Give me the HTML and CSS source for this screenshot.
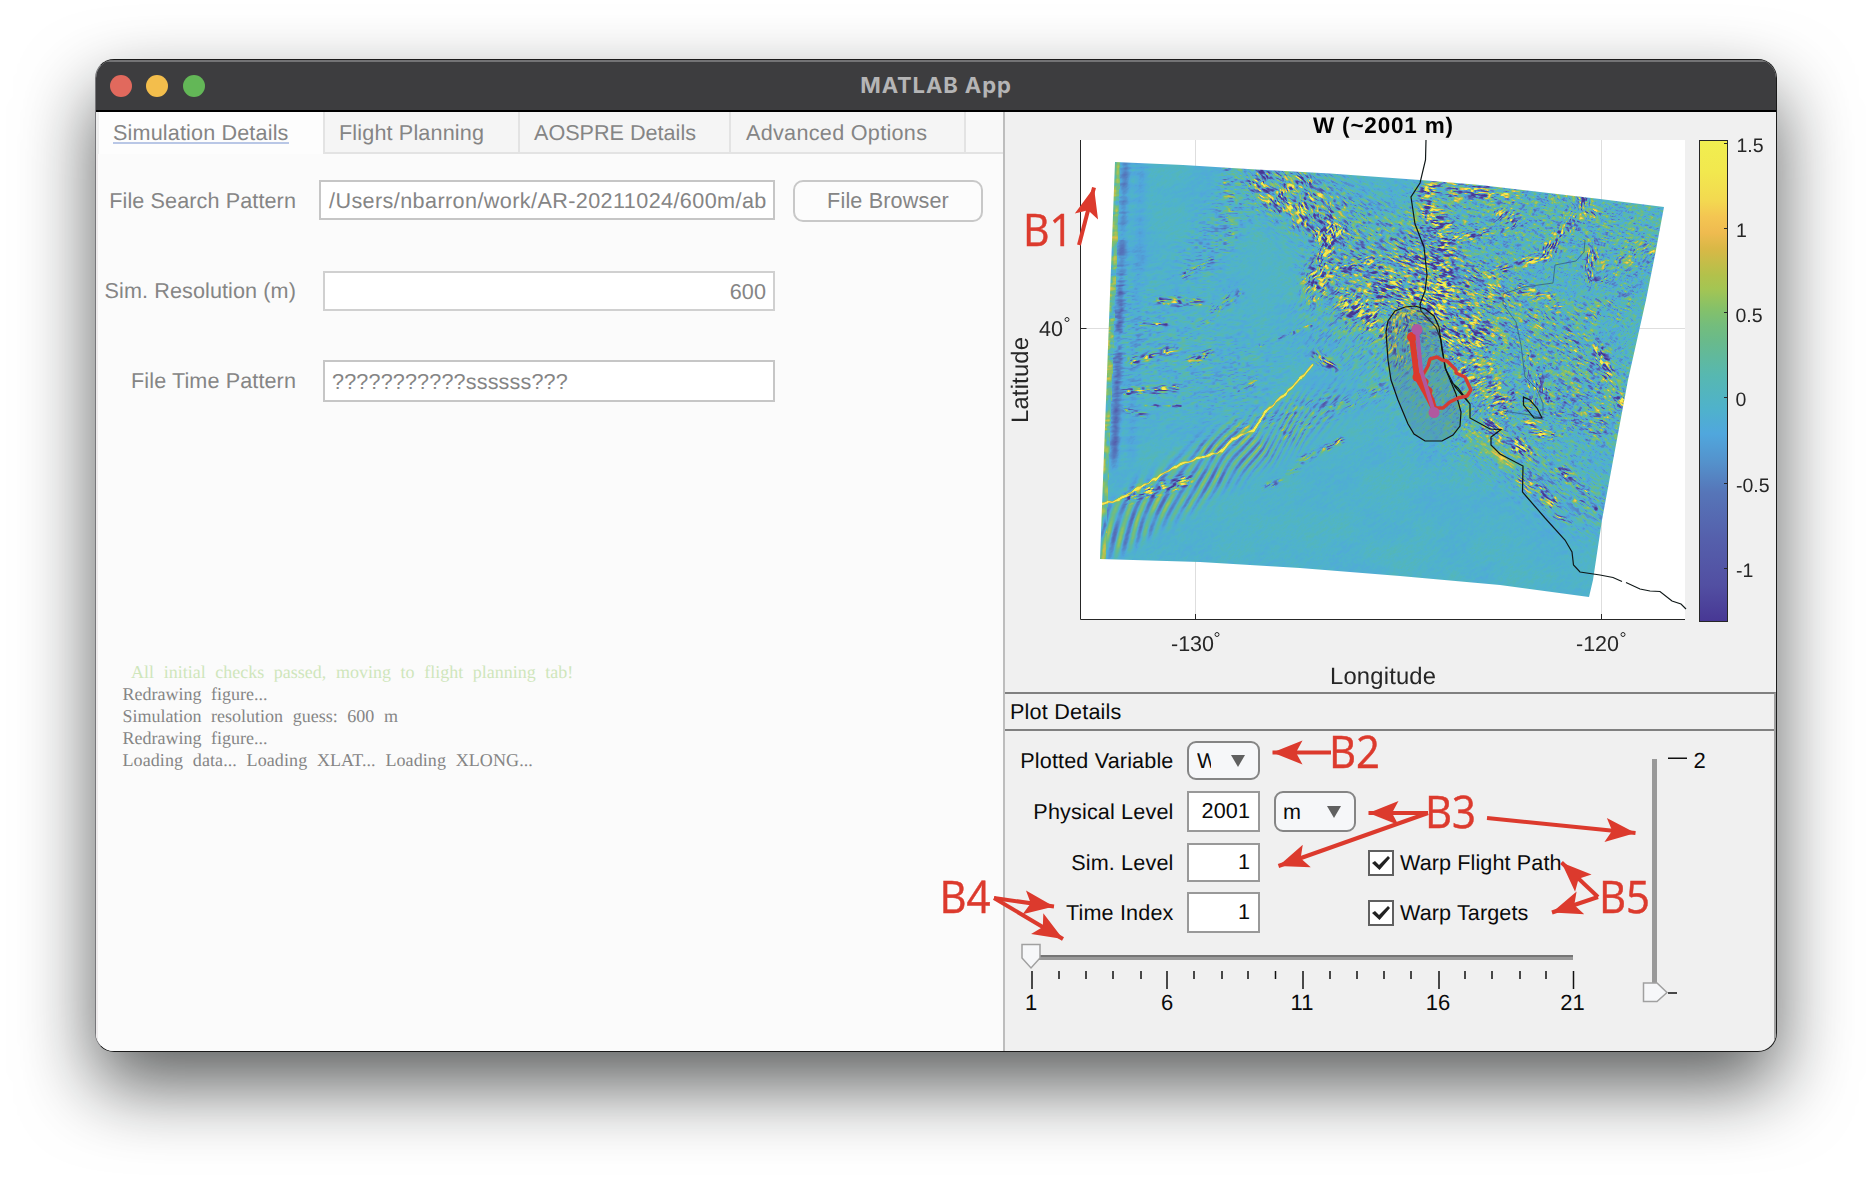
FILE: index.html
```html
<!DOCTYPE html>
<html lang="en">
<head>
<meta charset="utf-8">
<title>MATLAB App</title>
<link rel="stylesheet" href="styles.css">
</head>
<body>
<main class="window">
  <header class="titlebar">
    <div class="lights"><i class="light close"></i><i class="light minimize"></i><i class="light zoom"></i></div>
    <h1 class="app-title">MATLAB App</h1>
  </header>
  <div class="content">
    <section class="setup">
      <nav class="tabs">
        <a class="tab active"><span>Simulation Details</span></a>
        <a class="tab planning">Flight Planning</a>
        <a class="tab aospre">AOSPRE Details</a>
        <a class="tab advanced">Advanced Options</a>
        <span class="tab-rest"></span>
      </nav>
      <div class="row search"><label>File Search Pattern</label><div class="field path">/Users/nbarron/work/AR-20211024/600m/ab</div><button class="browse">File Browser</button></div>
      <div class="row resolution"><label>Sim. Resolution (m)</label><div class="field number">600</div></div>
      <div class="row time"><label>File Time Pattern</label><div class="field mask">???????????ssssss???</div></div>
      <div class="log"><p class="ok"> All initial checks passed, moving to flight planning tab!</p><p>Redrawing figure...</p><p>Simulation resolution guess: 600 m</p><p>Redrawing figure...</p><p class="loading">Loading data... Loading XLAT... Loading XLONG...</p></div>
    </section>
    <section class="viewer">
      <div class="plot">
        <canvas id="field" class="layer" width="771" height="580"></canvas>
        <svg class="layer" viewBox="1005 112 771 580">
          <defs>
            <linearGradient id="parula" x1="0" y1="0" x2="0" y2="1">
              <stop offset="0" stop-color="#f1ee50"/><stop offset=".16" stop-color="#f2e84e"/><stop offset=".3" stop-color="#f3d950"/><stop offset=".38" stop-color="#f4c652"/><stop offset=".46" stop-color="#efbb50"/>
              <stop offset=".54" stop-color="#d9b846"/><stop offset=".67" stop-color="#b3c14b"/><stop offset=".74" stop-color="#a4c553"/><stop offset=".84" stop-color="#85c169"/><stop offset=".92" stop-color="#74bd7c"/><stop offset="1" stop-color="#69ba8b"/>
            </linearGradient>
            <linearGradient id="parula-low" x1="0" y1="0" x2="0" y2="1">
              <stop offset="0" stop-color="#69ba8b"/><stop offset=".12" stop-color="#57b8b0"/><stop offset=".24" stop-color="#4fb2cb"/><stop offset=".33" stop-color="#50a7dd"/>
              <stop offset=".43" stop-color="#5492cc"/><stop offset=".54" stop-color="#5675b8"/><stop offset=".7" stop-color="#5560ac"/><stop offset=".87" stop-color="#524fa2"/><stop offset="1" stop-color="#473794"/>
            </linearGradient>
          </defs>
          <g class="coast">
            <path class="shore" d="M1426 140L1425.500 160L1420 183L1411 197L1415 224L1424 247L1427 275L1425 291L1420 304L1421 311L1436 327L1441 340L1445 368L1455 387L1470 404V418L1490 429L1501 429.500L1491 437L1491 445L1500 454L1523 466L1522.500 492L1545 518L1565 540L1572 552L1573.500 565L1580 572L1600 575L1613 577.500L1622 581.500M1626 582.500L1640 589L1650 591L1660 591.500L1672 601L1681 604L1686 609M1450 381L1458 388L1470 404"/>
            <path class="inland" d="M1585 240L1584 252L1576 261L1555 265L1553 283L1524 287L1503 294V304L1516 322L1521 345L1525 377L1537 389L1543 404V415M1503 411L1530 415L1542 418"/>
            <path class="shore" d="M1523.500 397V405L1534 418H1542L1537 408L1530 400Z"/>
          </g>
          <path class="range" d="M1386 332L1388 321L1395 311L1405 307L1415 306L1425 309L1434 316L1439 327L1442 350L1446 370L1456 394L1461 412L1460 426L1453 435L1442 441H1425L1414 434L1408 424L1398 400L1391 380L1388 360Z"/>
          <path class="target" d="M1424 373L1428 366L1430 359L1437 357L1442 360L1447 361L1456 370L1456 373L1465 377L1471 390L1467 396L1458 398L1450 402L1443 408H1435L1433 400L1430 394L1431 390L1426 386L1427 381L1421 376Z"/>
          <path class="flight warped" d="M1412 337L1417 377L1426 393L1435 410"/>
          <circle class="dot-red" cx="1412" cy="337" r="5"/><circle class="dot-red" cx="1417" cy="377" r="4.500"/>
          <path class="flight planned" d="M1417 330L1421 370L1434 412"/>
          <circle class="dot-purple" cx="1417" cy="329.500" r="5.500"/><circle class="dot-purple" cx="1434" cy="412.500" r="5.500"/>
          <path class="axis" d="M1080.500 140V619.500H1685M1195.500 619V614M1601.500 619V614M1081 328.500H1086.500"/>
          <rect x="1699" y="140" width="29" height="201" fill="url(#parula)"/>
          <rect x="1699" y="341" width="29" height="281" fill="url(#parula-low)"/>
          <rect class="colorbar" x="1699.500" y="140.500" width="28" height="481"/>
          <path class="axis" d="M1724 143.500h4M1724 228.500h4M1724 312.500h4M1724 397.500h4M1724 483.500h4M1724 568.500h4"/>
          <g class="scale-text">
            <text x="1736.500" y="152">1.5</text><text x="1736" y="237">1</text><text x="1735.500" y="321.500">0.5</text><text x="1735.500" y="406">0</text><text x="1736" y="491.500">-0.5</text><text x="1736" y="577">-1</text>
          </g>
          <g class="tick-text">
            <text x="1171" y="650.500" textLength="43">-130</text><text x="1576" y="650.500" textLength="43">-120</text><text x="1039" y="336">40</text>
          </g>
          <g class="degree"><circle cx="1217" cy="634.500" r="2"/><circle cx="1623" cy="634.500" r="2"/><circle cx="1067" cy="319.500" r="2"/></g>
          <text class="plot-title" x="1313" y="132.500" textLength="140">W (~2001 m)</text>
          <text class="axis-text" x="1330" y="683.500" textLength="106">Longitude</text>
          <text class="axis-text" transform="translate(1028 423) rotate(-90)" textLength="86">Latitude</text>
        </svg>
      </div>
      <div class="details">
        <h2 class="details-title">Plot Details</h2>
        <div class="controls">
          <div class="options">
            <div class="option variable"><label>Plotted Variable</label><div class="select"><span class="clip">W</span><i class="caret"></i></div></div>
            <div class="option"><label>Physical Level</label><div class="box">2001</div><div class="select units"><span>m</span><i class="caret"></i></div></div>
            <div class="option short"><label>Sim. Level</label><div class="box">1</div><div class="check"><svg viewBox="0 0 26 26"><path d="M1 1H25V25H1Z"/><path class="tickmark" d="M4 13L7 11L11 15L20 6L22 8L11.500 20Z"/></svg>Warp Flight Path</div></div>
            <div class="option last"><label>Time Index</label><div class="box">1</div><div class="check"><svg viewBox="0 0 26 26"><path d="M1 1H25V25H1Z"/><path class="tickmark" d="M4 13L7 11L11 15L20 6L22 8L11.500 20Z"/></svg>Warp Targets</div></div>
            <svg class="time-slider" viewBox="1005 933 595 100">
              <path class="rail-dark" d="M1035 956H1573"/><path class="rail" d="M1035 958.500H1573"/>
              <path class="thumb" d="M1022 944.500H1040V958L1031 968L1022 958Z"/>
              <path class="minor" d="M1059 971v8M1086 971v8M1113 971v8M1141 971v8M1194 971v8M1222 971v8M1248 971v8M1275.500 971v8M1330 971v8M1357 971v8M1384 971v8M1411 971v8M1465 971v8M1492 971v8M1520 971v8M1546 971v8"/>
              <path class="major" d="M1032 971v18M1167 971v18M1303 971v18M1439 971v18M1573.500 971v18"/>
              <g class="slider-text"><text x="1031" y="1009.500">1</text><text x="1167" y="1009.500">6</text><text x="1302" y="1009.500">11</text><text x="1438" y="1009.500">16</text><text x="1572.500" y="1009.500">21</text></g>
            </svg>
          </div>
          <svg class="level-slider" viewBox="1600 731 175 320">
            <path class="level-rail" d="M1654.500 759V984"/>
            <path class="thumb" d="M1643.500 983H1657L1667 992.500L1657 1001.500H1643.500Z"/>
            <path class="major" d="M1668 758.200H1687M1668 993H1677"/>
            <g class="slider-text"><text x="1699.500" y="768">2</text></g>
          </svg>
        </div>
      </div>
    </section>
  </div>
</main>
<svg class="callouts" viewBox="0 0 1872 1178">
  <defs><marker id="head" markerUnits="userSpaceOnUse" markerWidth="34" markerHeight="28" refX="30" refY="12" orient="auto" overflow="visible"><path d="M30 12L0 0L6.500 12L0 24Z"/></marker></defs>
  <g class="arrows">
    <path d="M1079 245L1094 187.500"/><path d="M1331 752.500H1272.500"/><path d="M1428 813H1368.500"/><path d="M1428 813L1278.500 866"/><path d="M1487 818L1635.500 833"/>
    <path d="M994 898L1054 906.500"/><path d="M994 898L1063 939"/><path d="M1598 897L1561.500 862.500"/><path d="M1598 897L1552 912.500"/>
  </g>
  <g class="callout-text">
    <text x="1023" y="245.500" textLength="50" lengthAdjust="spacingAndGlyphs">B1</text>
    <text x="1329" y="768" textLength="51" lengthAdjust="spacingAndGlyphs">B2</text>
    <text x="1425" y="827.500" textLength="51" lengthAdjust="spacingAndGlyphs">B3</text>
    <text x="939.500" y="912.500" textLength="51" lengthAdjust="spacingAndGlyphs">B4</text>
    <text x="1599" y="912.500" textLength="51" lengthAdjust="spacingAndGlyphs">B5</text>
  </g>
</svg>
<script src="field.js"></script>
</body>
</html>
```
FILE: styles.css
```css
* { box-sizing: border-box; }
body { margin: 0; padding: 59px 95px; width: 1872px; height: 1178px; overflow: hidden; position: relative; background: #fff; font: 21.600px/1 "Liberation Sans", Arial, sans-serif; letter-spacing: .1px; text-rendering: geometricPrecision; }
.window { width: 1682px; height: 993px; border: 1px solid #1a1a1a; border-left-color: #77777a; border-radius: 19px; overflow: hidden; background: #f0f0f0; box-shadow: 0 34px 74px rgba(10,14,14,.66); display: flex; flex-direction: column; }
.titlebar { height: 52px; flex: none; background: #3d3d3f; border-bottom: 2px solid #000; box-shadow: inset 0 2px 0 #737375; position: relative; display: flex; align-items: center; justify-content: center; }
.lights { position: absolute; left: 14px; top: 15px; display: flex; gap: 14.500px; }
.light { width: 22px; height: 22px; border-radius: 50%; }
.light.minimize { margin-left: -.500px; }
.close { background: #e1695d; }
.minimize { background: #f3be4c; }
.zoom { background: #63b757; }
.app-title { margin: 0; font: 700 22px/1 Inter, "Liberation Sans", sans-serif; color: #b5b5b6; letter-spacing: .9px; padding-top: 1px; }
.content { flex: 1; display: flex; min-height: 0; }
.setup { width: 909px; border-right: 2px solid #bdbdbd; background: #fbfbfb; color: #858585; box-shadow: inset 2px 0 0 #eeebec; }
.tabs { display: flex; height: 42px; border-left: 3px solid #eee; letter-spacing: .15px; }
.tab { padding: 10px 0 0 13px; background: #f5f5f5; border-right: 2px solid #e3e3e3; border-bottom: 2px solid #e3e3e3; width: 211px; }
.tab.active { width: 226px; padding-left: 14px; background: #fdfdfd; border-bottom: 0; }
.tab.active span { display: inline-block; height: 22px; border-bottom: 2px solid #b9c7e6; }
.tab.planning { width: 195px; padding-left: 14px; }
.tab.aospre { padding-left: 14px; letter-spacing: 0; }
.tab.advanced { width: 235px; padding-left: 15px; letter-spacing: .3px; }
.tab-rest { flex: 1; background: #f8f8f8; border-bottom: 2px solid #e3e3e3; }
.row { display: flex; align-items: center; height: 42px; margin-bottom: 49px; }
.row label { width: 200px; text-align: right; }
.row.search { margin-top: 26px; align-items: flex-start; }
.row.search label { padding-top: 10px; }
.row.resolution { height: 40px; }
.row.time { margin-bottom: 259px; }
.field { margin-left: 27px; width: 452px; align-self: stretch; border: 2px solid #c6c6c6; background: #fff; display: flex; align-items: center; padding: 1px 7px 0; white-space: nowrap; overflow: hidden; }
.field.path { margin-left: 23px; width: 456px; height: 40px; padding: 1px 0 0 8px; letter-spacing: .400px; }
.field.mask { letter-spacing: .150px; }
.field.number { justify-content: flex-end; border-color: #d0d0d0; }
.browse { margin-left: 18px; width: 190px; height: 42px; border: 2px solid #c8c8c8; border-radius: 10px; background: #fcfcfc; color: inherit; font: inherit; letter-spacing: .15px; padding: 0 0 1px; }
.log { padding-left: 26.500px; font: 18px/22px "Liberation Serif", "Times New Roman", serif; letter-spacing: 0; word-spacing: 5.100px; white-space: pre; }
.log p { margin: 0; }
.log .ok { color: #cfe6bb; }
.log .loading { letter-spacing: .09px; }
.viewer { flex: 1; display: flex; flex-direction: column; min-width: 0; color: #0a0a0a; }
.plot { height: 580px; flex: none; position: relative; }
.layer { position: absolute; inset: 0; width: 771px; height: 580px; }
svg path { fill: none; }
svg text { letter-spacing: 0; }
.shore { stroke: #101818; stroke-width: 1.200; }
.inland { stroke: #345f86; stroke-width: 1; opacity: .8; }
.range { stroke: #111; stroke-width: 1.200; }
svg path.range { fill: rgba(80,120,120,.25); }
.target { stroke: #d43d33; stroke-width: 3.400; stroke-linejoin: bevel; }
.flight { stroke-width: 6; }
.warped { stroke: #dc3a2d; }
.planned { stroke: #b0589f; stroke-width: 4; }
.dot-red { fill: #dc3a2d; }
.dot-purple { fill: #b0589f; }
.axis { stroke: #262626; stroke-width: 1; }
.colorbar { stroke: #262626; fill: none; }
.scale-text { font-size: 19.500px; fill: #262626; }
.tick-text { font-size: 21.500px; fill: #262626; }
.degree { fill: none; stroke: #262626; }
.plot-title { font-size: 22.500px; font-weight: 700; fill: #000; }
.axis-text { font-size: 23.800px; fill: #262626; }
.details { flex: 1; border-top: 2px solid #808080; border-right: 2px solid #a0a0a0; display: flex; flex-direction: column; }
.details-title { margin: 0; height: 37px; border-bottom: 2px solid #808080; padding: 7px 0 0 5px; font: inherit; letter-spacing: .2px; }
.controls { flex: 1; display: flex; }
.options { width: 595px; padding-top: 10px; display: flex; flex-direction: column; }
.option { height: 41px; margin-bottom: 11px; display: flex; align-items: center; }
.option.variable { height: 39px; }
.option.short { height: 39px; margin-bottom: 10px; }
.option.last { margin-bottom: 0; }
.option label { width: 168.500px; text-align: right; margin-right: 13.500px; white-space: nowrap; letter-spacing: .15px; }
.option.variable label { padding-top: 1px; }
.box { width: 73px; align-self: stretch; border: 2px solid #999; background: #fff; display: flex; align-items: center; justify-content: flex-end; padding: 0 8px 1px 0; }
.select { width: 73px; align-self: stretch; border: 2px solid #858585; border-radius: 9px; background: #f6f7f9; display: flex; align-items: center; justify-content: space-between; padding: 0 13px 0 8px; }
.units { width: 82px; margin-left: 14px; padding: 0 13px 0 7px; }
.clip { width: 14px; overflow: hidden; }
.caret { border: 7px solid transparent; border-top: 12px solid #606060; border-bottom: 0; }
.check { margin-left: 108px; display: flex; align-items: center; gap: 6px; white-space: nowrap; }
.check svg { width: 26px; height: 26px; }
.check path { fill: #fff; stroke: #606060; stroke-width: 2; }
.check .tickmark { fill: #222; stroke: none; }
.time-slider { width: 595px; height: 100px; }
.level-slider { width: 175px; height: 320px; flex: none; }
.rail-dark { stroke: #757575; stroke-width: 2; }
.rail { stroke: #999; stroke-width: 3; }
.level-rail { stroke: #999; stroke-width: 5; }
svg path.thumb { fill: #f6f7f9; stroke: #a0a0a0; stroke-width: 1.500; }
.minor, .major { stroke: #111; stroke-width: 1.500; }
.slider-text { font-size: 22px; text-anchor: middle; fill: #0a0a0a; }
.callouts { position: absolute; left: 0; top: 0; width: 1872px; height: 1178px; pointer-events: none; }
.callouts marker path, .callout-text { fill: #dc3a2d; }
.arrows path { stroke: #dc3a2d; stroke-width: 4; marker-end: url(#head); }
.arrows marker path { stroke: none; }
.callout-text { font: 45px "Open Sans", "Noto Sans", sans-serif; stroke: #dc3a2d; stroke-width: .500; }
```
FILE: field.js
```js
// Paints the vertical-velocity field as a colour-mapped raster under the chart lines.
const X0 = 1005, Y0 = 112;
const canvas = document.getElementById('field');
const ctx = canvas.getContext('2d');
ctx.fillStyle = '#fff';
ctx.fillRect(1081 - X0, 140 - Y0, 604, 480);
ctx.fillStyle = '#dedede';
ctx.fillRect(1195 - X0, 140 - Y0, 1, 479);
ctx.fillRect(1601 - X0, 140 - Y0, 1, 479);
ctx.fillRect(1081 - X0, 328 - Y0, 604, 1);

const stops = [[-1.3, 71, 55, 148], [-0.8, 84, 88, 168], [-0.5, 84, 122, 190], [-0.3, 83, 147, 206], [-0.14, 80, 167, 220],
  [0, 79, 179, 203], [0.12, 84, 183, 180], [0.35, 108, 187, 134], [0.55, 140, 193, 98], [0.8, 200, 190, 72],
  [1, 238, 190, 80], [1.2, 244, 226, 76], [1.5, 241, 238, 80]];
function color(v) {
  if (v <= stops[0][0]) return stops[0].slice(1);
  for (let i = 1; i < stops.length; i++) {
    if (v <= stops[i][0]) {
      const a = stops[i - 1], b = stops[i], t = (v - a[0]) / (b[0] - a[0]);
      return [1, 2, 3].map(k => a[k] + (b[k] - a[k]) * t);
    }
  }
  return stops[stops.length - 1].slice(1);
}
function hash(x, y) {
  let h = Math.imul(x, 374761393) + Math.imul(y, 668265263);
  h = Math.imul(h ^ (h >>> 13), 1274126177);
  return ((h ^ (h >>> 16)) >>> 0) / 2147483648 - 1;
}
function noise(x, y) {
  const i = Math.floor(x), j = Math.floor(y), s = t => t * t * (3 - 2 * t), u = s(x - i), w = s(y - j);
  const a = hash(i, j), b = hash(i + 1, j), c = hash(i, j + 1), d = hash(i + 1, j + 1);
  return a + (b - a) * u + (c - a) * w + (a - b - c + d) * u * w;
}
function streaks(x, y, deg, len, wid) {
  const r = deg * Math.PI / 180, c = Math.cos(r), s = Math.sin(r);
  return noise((x * c + y * s) / len, (y * c - x * s) / wid);
}
function distance(x, y, a, b, c, d) {
  const p = c - a, q = d - b, t = Math.max(0, Math.min(1, ((x - a) * p + (y - b) * q) / (p * p + q * q + 1e-6)));
  return Math.hypot(x - a - t * p, y - b - t * q);
}
// x1, y1, x2, y2, half width, amplitude, streak angle
const bands = [
  [1256, 174, 1275, 200, 13, 2.2, 40], [1285, 195, 1330, 232, 16, 2.4, 60], [1330, 235, 1315, 290, 13, 2, -55],
  [1305, 180, 1335, 210, 12, 1.4, 45], [1330, 270, 1375, 262, 9, 1.7, -20], [1350, 300, 1375, 322, 15, 2.2, -35],
  [1385, 288, 1425, 300, 18, 2.2, 20], [1395, 265, 1425, 262, 10, 2.2, 25], [1400, 320, 1400, 355, 14, 2, -70],
  [1424, 185, 1430, 225, 9, 2.3, 15], [1440, 220, 1445, 285, 10, 2.3, -5], [1430, 300, 1460, 350, 13, 2.2, 35],
  [1455, 300, 1480, 340, 13, 1.4, 20], [1460, 360, 1500, 400, 16, 1.6, -25], [1430, 185, 1510, 195, 11, 1.6, 5],
  [1500, 215, 1510, 220, 9, 2.2, -40], [1450, 240, 1500, 230, 6, 1.8, -20], [1490, 273, 1545, 255, 4.5, 2.8, -20],
  [1545, 253, 1578, 215, 7, 2.1, -70], [1560, 190, 1590, 210, 12, 1.6, 60], [1592, 245, 1590, 275, 7, 1.7, 70],
  [1600, 275, 1650, 245, 14, .9, -45], [1520, 290, 1555, 303, 8, 1.7, -10], [1480, 280, 1505, 300, 14, 1.3, 30],
  [1530, 315, 1600, 365, 12, 1, 35], [1598, 345, 1620, 402, 7, 1.9, 50], [1530, 360, 1540, 395, 9, 1.6, 80],
  [1490, 425, 1530, 455, 7, 2.5, 30], [1530, 425, 1550, 438, 6, 2.3, 10], [1525, 480, 1550, 500, 8, 2.2, 30],
  [1560, 470, 1585, 490, 5, 1.6, 25], [1575, 500, 1595, 508, 3, 2, 25], [1555, 515, 1570, 522, 3, 1.8, 30],
  [1500, 400, 1610, 420, 26, .8, 20], [1580, 330, 1620, 300, 22, .8, 30],
  [1228, 170, 1228, 245, 7, .9, 5], [1160, 300, 1198, 302, 4.5, 2.2, 2], [1140, 324, 1165, 324, 2, 1.8, 2],
  [1185, 275, 1210, 260, 4, 1.2, -20], [1130, 362, 1175, 348, 4, 1.9, -12], [1125, 391, 1175, 388, 4, 2.1, 0],
  [1190, 360, 1210, 352, 4, 1.5, -20], [1145, 405, 1180, 405, 1.5, 1.6, 2], [1200, 320, 1240, 290, 8, .7, -25],
  [1125, 408, 1145, 416, 3, 1.8, 0], [1315, 355, 1335, 368, 5, 1.7, 40], [1130, 495, 1185, 480, 6, 2.2, -18],
  [1260, 345, 1310, 325, 2, 1, -25], [1245, 425, 1330, 400, 10, .6, -35], [1300, 460, 1340, 440, 4, 1.5, -28],
  [1265, 488, 1295, 470, 4, .9, -28], [1285, 430, 1390, 385, 8, .8, -30], [1240, 390, 1255, 380, 3, 1.2, -30]
];
const broad = [
  [1280, 185, 1400, 250, 38, .55, 30], [1340, 320, 1470, 400, 45, .35, -45], [1460, 200, 1630, 240, 50, .4, 15],
  [1480, 290, 1600, 400, 50, .5, 30], [1110, 330, 1230, 380, 60, .22, -8], [1200, 260, 1250, 180, 25, .3, 0],
  [1480, 430, 1590, 500, 35, .4, 35], [1430, 240, 1480, 340, 35, .75, 20], [1340, 270, 1420, 310, 35, .7, 20]
];
const front = [1101, 504, 1118, 500, 1135, 489, 1155, 478, 1175, 466, 1203, 456, 1221, 451, 1232, 439, 1253, 430, 1265, 412, 1285, 393, 1300, 378, 1312, 364];
const edge = [[1115, 162], [1183, 165], [1248, 169], [1330, 173.500], [1427, 180.500], [1480, 185], [1600, 199], [1664, 207], [1655, 255],
  [1646, 300], [1628, 380], [1602, 520], [1593, 580], [1589, 597], [1500, 585], [1400, 576], [1300, 568], [1200, 562], [1100, 559]];
function value(x, y) {
  let v = -.01 + .06 * noise(x / 28, y / 24) + .04 * streaks(x, y, -30, 9, 2.5);
  const grain = streaks(x, y, -38, 2.2, 1.2), rightSide = Math.max(0, Math.min(1, (x - 1340) / 160)) * Math.max(0, Math.min(1, (500 - y) / 90));
  v += grain * (.05 + .22 * rightSide) + .05 * rightSide;
  for (const b of broad) {
    const e = Math.exp(-Math.pow(distance(x, y, b[0], b[1], b[2], b[3]) / b[4], 2));
    if (e > .02) v += e * b[5] * streaks(x, y, b[6], 4, 1.4) * 1.4;
  }
  for (const b of bands) {
    const d = distance(x, y, b[0], b[1], b[2], b[3]) / b[4];
    if (d < 2.2) v += Math.exp(-d * d) * (.65 + .6 * noise(x / 7 + 50, y / 7)) * b[5] * 1.15 * streaks(x + 3 * noise(x / 9, y / 9), y, b[6], 4, 1.35);
  }
  // inflow boundary along the western edge
  const u = x - (1115 - (y - 162) * 15 / 397);
  if (u < 5) v += .35 + .4 * noise(u / 3, y / 7);
  const strong = y < 450 ? 1 : Math.max(0, 1 - (y - 450) / 25);
  v -= strong * Math.exp(-Math.pow((u - 10) / 4.5, 2)) * (.5 + .2 * noise(3, y / 18)) * (y < 240 ? .6 : 1);
  v -= strong * .14 * Math.exp(-Math.pow((u - 27) / 6, 2));
  v += Math.exp(-u / 22) * .25 * streaks(x, y, -3, 24, 2.2) * strong;
  // lee-wave train behind the front
  const along = (x - 1105) * .86 - (y - 535) * .51, across = (x - 1105) * .51 + (y - 535) * .86;
  if (along > -20 && along < 330) {
    const center = 6 - 6 * Math.sin(along / 80), width = 23 + 6 * Math.sin(along / 90);
    const env = Math.exp(-Math.pow((across - center + 6) / width, 4)) * (along < 170 ? 1 : Math.max(0, 1 - (along - 170) / 130));
    const tilt = .2 + Math.min(1, Math.max(0, along) / 180) * .55;
    const phase = ((x - 1104) + (y - 535) * tilt) / (13.2 - Math.min(5, Math.max(0, x - 1130) / 35)) * 6.283;
    v += env * .6 * Math.sin(phase + 1.5 * noise(x / 35, y / 35)) * (.8 + .4 * noise(x / 14, y / 14));
  }
  for (let i = 0; i < front.length - 2; i += 2) {
    const d = distance(x, y + noise(x / 4, 2), front[i], front[i + 1], front[i + 2], front[i + 3]);
    if (d < 3.5) v += 1.4 * Math.exp(-d * d / 1.2);
  }
  v += .2 * Math.exp(-Math.pow(distance(x, y, 1470, 430, 1510, 465) / 9, 2)) + .5 * Math.exp(-Math.pow(distance(x, y, 1495, 452, 1512, 466) / 3, 2));
  return v;
}
const raster = document.createElement('canvas');
raster.width = 771; raster.height = 580;
const rctx = raster.getContext('2d'), image = rctx.createImageData(771, 580);
for (let y = 155; y < 600; y++) for (let x = 1095; x < 1668; x++) {
  const c = color(value(x, y)), k = ((y - Y0) * 771 + x - X0) * 4;
  image.data[k] = c[0]; image.data[k + 1] = c[1]; image.data[k + 2] = c[2]; image.data[k + 3] = 255;
}
rctx.putImageData(image, 0, 0);
ctx.beginPath();
edge.forEach(p => ctx.lineTo(p[0] - X0, p[1] - Y0));
ctx.closePath();
ctx.clip();
ctx.drawImage(raster, 0, 0);
```
